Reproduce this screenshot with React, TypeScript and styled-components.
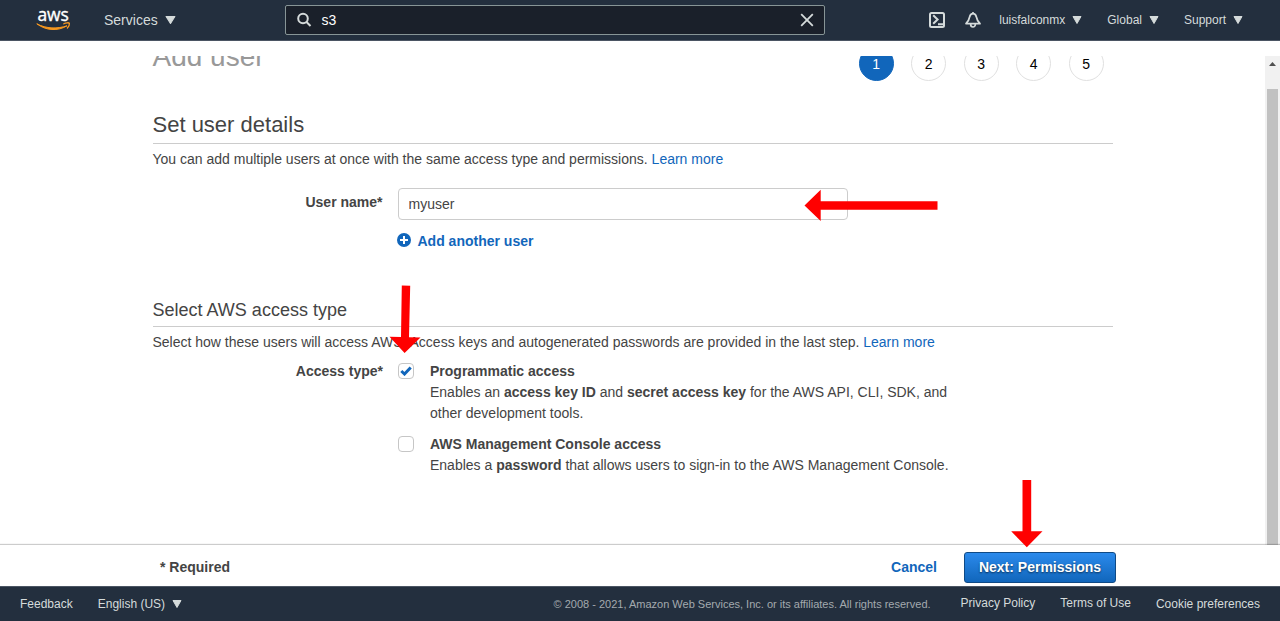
import React from "react";
import styled, { createGlobalStyle } from "styled-components";

const GlobalStyle = createGlobalStyle`
  * { box-sizing: border-box; }
  body {
    margin: 0;
    background: #fff;
    color: #444;
    font: 14px/21px "Liberation Sans", Arial, sans-serif;
  }
`;

const Page = styled.div`
  position: relative;
  display: flex;
  flex-direction: column;
  width: 1280px;
  height: 621px;
  overflow: hidden;
`;

const TopBar = styled.header`
  display: flex;
  align-items: center;
  flex: none;
  height: 41px;
  padding: 0 37px 1px 36px;
  background: #232f3e;
  border-bottom: 1px solid #4b5563;
  color: #d5dbdb;
`;

const Logo = styled.svg`
  flex: none;
  display: block;
  width: 36px;
  height: 26px;
  margin-right: 32px;
  overflow: visible;
`;

const Caret = styled.svg.attrs({
  viewBox: "0 0 10 8",
  preserveAspectRatio: "none",
  children: <path d="M1 .5H9L5 7.5Z" />,
})<{ $size?: number }>`
  display: inline-block;
  flex: none;
  width: ${(p) => p.$size ?? 10}px;
  height: 8px;
  margin-left: 7px;
  fill: #d5dbdb;
  stroke: #d5dbdb;
  stroke-linejoin: round;
`;

const ServicesMenu = styled.div`
  display: flex;
  align-items: center;
  width: 181px;
  padding-top: 1px;
`;

const SearchBox = styled.div`
  display: flex;
  align-items: center;
  width: 540px;
  height: 30px;
  padding: 0 10px 0 9.5px;
  background: #1a202a;
  border: 1px solid #879596;
  border-radius: 2px;
  color: #fff;
`;

const SearchValue = styled.span`
  flex: 1;
  margin-left: 10px;
  padding-top: 1px;
`;

const Icon = styled.svg`
  display: block;
  flex: none;
  fill: none;
  stroke: #d5dbdb;
  stroke-width: 2;
`;

const NavIcons = styled.div`
  display: flex;
  align-items: center;
  gap: 19px;
  margin-left: auto;
`;

const NavMenu = styled.div<{ $gap: number }>`
  display: flex;
  align-items: center;
  margin-left: ${(p) => p.$gap}px;
  padding-top: 1px;
  font-size: 12px;
`;

const Body = styled.div`
  display: flex;
  flex: none;
  height: 489px;
  margin-top: 15px;
  overflow: hidden;
`;

const Content = styled.main`
  flex: 1;
  overflow: hidden;
`;

const Column = styled.div`
  width: 960px;
  margin: -10px auto 0;
`;

const TitleRow = styled.div`
  display: flex;
  justify-content: space-between;
  height: 35px;
  padding-right: 8.75px;
`;

const PageTitle = styled.h1`
  margin: -6px 0 0;
  color: #999;
  font-size: 28px;
  font-weight: 400;
  line-height: 33px;
`;

const Steps = styled.div`
  display: flex;
  gap: 17.5px;
`;

const Step = styled.div<{ $active?: boolean }>`
  width: 35px;
  height: 35px;
  border: 1px solid ${(p) => (p.$active ? "#1166bb" : "#e0e0e0")};
  border-radius: 50%;
  background: ${(p) => (p.$active ? "#1166bb" : "#fff")};
  color: ${(p) => (p.$active ? "#fff" : "#000")};
  line-height: 34px;
  text-align: center;
`;

const SectionTitle = styled.h2<{ $small?: boolean }>`
  margin: ${(p) => (p.$small ? "44px 0 0" : "28px 0 0")};
  height: ${(p) => (p.$small ? 31 : 35)}px;
  border-bottom: 1px solid #ccc;
  font-size: ${(p) => (p.$small ? 18 : 22)}px;
  font-weight: 400;
  line-height: ${(p) => (p.$small ? 28 : 31)}px;
`;

const Intro = styled.p`
  margin: 5px 0 0;
`;

const Link = styled.a`
  color: #1166bb;
`;

const Field = styled.div<{ $top: number; $label?: number }>`
  display: grid;
  grid-template-columns: ${(p) => p.$label ?? 230}px 1fr;
  column-gap: 15px;
  margin-top: ${(p) => p.$top}px;
`;

const Label = styled.label<{ $top?: number }>`
  padding-top: ${(p) => p.$top ?? 0}px;
  font-weight: 700;
  text-align: right;
`;

const TextInput = styled.input`
  display: block;
  width: 450px;
  height: 32px;
  padding: 0 10px;
  border: 1px solid #ccc;
  border-radius: 4px;
  background: #fff;
  color: #444;
  font: inherit;
`;

const AddUser = styled.a`
  display: flex;
  align-items: flex-start;
  gap: 6.5px;
  margin: 11px 0 0 -0.5px;
  color: #1166bb;
  font-weight: 700;
`;

const PlusIcon = styled.svg`
  display: block;
  width: 14px;
  height: 14px;
  margin-top: 2px;
`;

const Options = styled.div`
  display: flex;
  flex-direction: column;
  gap: 10px;
`;

const Option = styled.div`
  display: flex;
  gap: 16px;
`;

const CheckBox = styled.span`
  display: flex;
  flex: none;
  align-items: center;
  justify-content: center;
  width: 16px;
  height: 16px;
  margin-top: 2px;
  border: 1px solid #c6c6c6;
  border-radius: 4px;
`;

const OptionText = styled.div`
  width: 530px;
`;

const ScrollTrack = styled.div`
  width: 15px;
  padding: 6px 2px 0;
  background: #f1f1f1;
`;

const ScrollArrow = styled.div`
  width: 7px;
  height: 4px;
  margin: 0 0 23px 2px;
  background: #505050;
  clip-path: polygon(50% 0, 100% 100%, 0 100%);
`;

const ScrollThumb = styled.div`
  width: 11px;
  height: 460px;
  background: #c1c1c1;
`;

const ActionBar = styled.div`
  display: flex;
  align-items: center;
  flex: none;
  height: 41px;
  padding: 3px 164px 0 160px;
  background: #fff;
  box-shadow: 0 -1px 1px rgba(0, 0, 0, 0.2);
  z-index: 1;
  font-weight: 700;
`;

const Cancel = styled.a`
  margin: 0 27px 0 auto;
  color: #1166bb;
`;

const NextButton = styled.button`
  width: 152px;
  height: 31px;
  padding: 0;
  border: 1px solid #0f4a86;
  border-radius: 3px;
  background: linear-gradient(#2b8aec, #1166bb);
  color: #fff;
  font: 700 14px/28px "Liberation Sans", Arial, sans-serif;
  text-shadow: 0 1px 2px rgba(0, 0, 0, 0.6);
`;

const Footer = styled.footer`
  display: flex;
  align-items: center;
  flex: none;
  height: 35px;
  padding: 0 20px;
  background: #232f3e;
  border-top: 1px solid #4b5563;
  color: #d5dbdb;
  font-size: 12px;
`;

const FooterItem = styled.span<{ $raised?: boolean }>`
  margin-left: 25px;
  padding-bottom: ${(p) => (p.$raised ? 2 : 0)}px;
`;

const Copyright = styled.span`
  margin: 0 5px 0 auto;
  color: #a3aaae;
  font-size: 11px;
`;

const Annotations = styled.svg`
  position: absolute;
  inset: 0;
  z-index: 2;
  fill: #f00;
  pointer-events: none;
`;

export default function App() {
  return (
    <Page>
      <GlobalStyle />
      <TopBar>
        <Logo viewBox="0 0 36 26">
          <text x="1.4" y="13.6" fill="#fff" stroke="#fff" strokeWidth="0.4" fontFamily="Open Sans, Noto Sans, sans-serif" fontSize="19" textLength="31.5" lengthAdjust="spacingAndGlyphs">aws</text>
          <path d="M0.8 16.8C10 23.8 22 24.4 31 18.8C22 21.9 10 21.9 0.8 16.8Z" fill="#f7981f" stroke="#f7981f" strokeWidth="1" strokeLinejoin="round" />
          <path d="M27.8 16.8C30 15.4 33 15.6 33.4 16.4C33.6 17.8 32.7 19.6 31.4 21" fill="none" stroke="#f7981f" strokeWidth="1.3" strokeLinecap="round" />
        </Logo>
        <ServicesMenu>Services<Caret $size={11} /></ServicesMenu>
        <SearchBox>
          <Icon width="16" height="16" viewBox="0 0 16 16"><circle cx="7" cy="6.5" r="4.8" /><path d="M10.5 10L14.5 14" /></Icon>
          <SearchValue>s3</SearchValue>
          <Icon width="14" height="14" viewBox="0 0 14 14"><path d="M1.2 1.2L12.8 12.8M12.8 1.2L1.2 12.8" strokeWidth="1.8" /></Icon>
        </SearchBox>
        <NavIcons>
          <Icon width="16" height="16" viewBox="0 0 16 16"><rect x="1" y="1" width="14" height="14" rx="1.5" /><path d="M4.2 3.2L8.6 7.5L4.2 11.8M9 12.2H14" /></Icon>
          <Icon width="18" height="16" viewBox="0 0 18 16" strokeLinejoin="round"><path d="M9 1.6C7 1.6 6 3 5.6 5C5.2 7.6 4.3 9.2 2 11.7H16C13.7 9.2 12.8 7.6 12.4 5C12 3 11 1.6 9 1.6ZM9 0V2M6.6 12C6.6 16 11.4 16 11.4 12" strokeWidth="1.7" /></Icon>
        </NavIcons>
        <NavMenu $gap={17}>luisfalconmx<Caret /></NavMenu>
        <NavMenu $gap={25}>Global<Caret /></NavMenu>
        <NavMenu $gap={25}>Support<Caret /></NavMenu>
      </TopBar>

      <Body>
        <Content>
          <Column>
            <TitleRow>
              <PageTitle>Add user</PageTitle>
              <Steps>
                {[1, 2, 3, 4, 5].map((n) => (
                  <Step key={n} $active={n === 1}>{n}</Step>
                ))}
              </Steps>
            </TitleRow>

            <SectionTitle>Set user details</SectionTitle>
            <Intro>
              You can add multiple users at once with the same access type and permissions. <Link>Learn more</Link>
            </Intro>
            <Field $top={18}>
              <Label $top={4}>User name*</Label>
              <div>
                <TextInput defaultValue="myuser" />
                <AddUser>
                  <PlusIcon viewBox="0 0 14 14">
                    <circle cx="7" cy="7" r="7" fill="#1166bb" />
                    <path d="M7 3V11M3 7H11" stroke="#fff" strokeWidth="2" />
                  </PlusIcon>
                  Add another user
                </AddUser>
              </div>
            </Field>

            <SectionTitle $small>Select AWS access type</SectionTitle>
            <Intro>
              Select how these users will access AWS. Access keys and autogenerated passwords are provided in the last step. <Link>Learn more</Link>
            </Intro>
            <Field $top={8} $label={230.5}>
              <Label>Access type*</Label>
              <Options>
                <Option>
                  <CheckBox>
                    <svg width="12" height="10" viewBox="0 0 12 10">
                      <path d="M1.3 5L4.5 8L10.7 1.5" fill="none" stroke="#1166bb" strokeWidth="3" />
                    </svg>
                  </CheckBox>
                  <OptionText>
                    <b>Programmatic access</b><br />
                    Enables an <b>access key ID</b> and <b>secret access key</b> for the AWS API, CLI, SDK, and other development tools.
                  </OptionText>
                </Option>
                <Option>
                  <CheckBox />
                  <OptionText>
                    <b>AWS Management Console access</b><br />
                    Enables a <b>password</b> that allows users to sign-in to the AWS Management Console.
                  </OptionText>
                </Option>
              </Options>
            </Field>
          </Column>
        </Content>
        <ScrollTrack>
          <ScrollArrow />
          <ScrollThumb />
        </ScrollTrack>
      </Body>

      <ActionBar>
        <span>* Required</span>
        <Cancel>Cancel</Cancel>
        <NextButton>Next: Permissions</NextButton>
      </ActionBar>

      <Footer>
        <span>Feedback</span>
        <FooterItem>English (US)<Caret /></FooterItem>
        <Copyright>© 2008 - 2021, Amazon Web Services, Inc. or its affiliates. All rights reserved.</Copyright>
        <FooterItem $raised>Privacy Policy</FooterItem>
        <FooterItem $raised>Terms of Use</FooterItem>
        <FooterItem>Cookie preferences</FooterItem>
      </Footer>

      <Annotations width="1280" height="621" viewBox="0 0 1280 621">
        <path d="M804.5 205.5L820.7 189.8V201.2H937.5V209.7H820.7V221Z" />
        <path d="M401.8 285.5L410.2 285.8L409 337.2L420.5 337.4L404.6 353L389.5 336.8L401 337Z" />
        <path d="M1022.5 480H1031.2V531.3H1042.5L1026.8 547.3L1011.2 531.3H1022.5Z" />
      </Annotations>
    </Page>
  );
}
